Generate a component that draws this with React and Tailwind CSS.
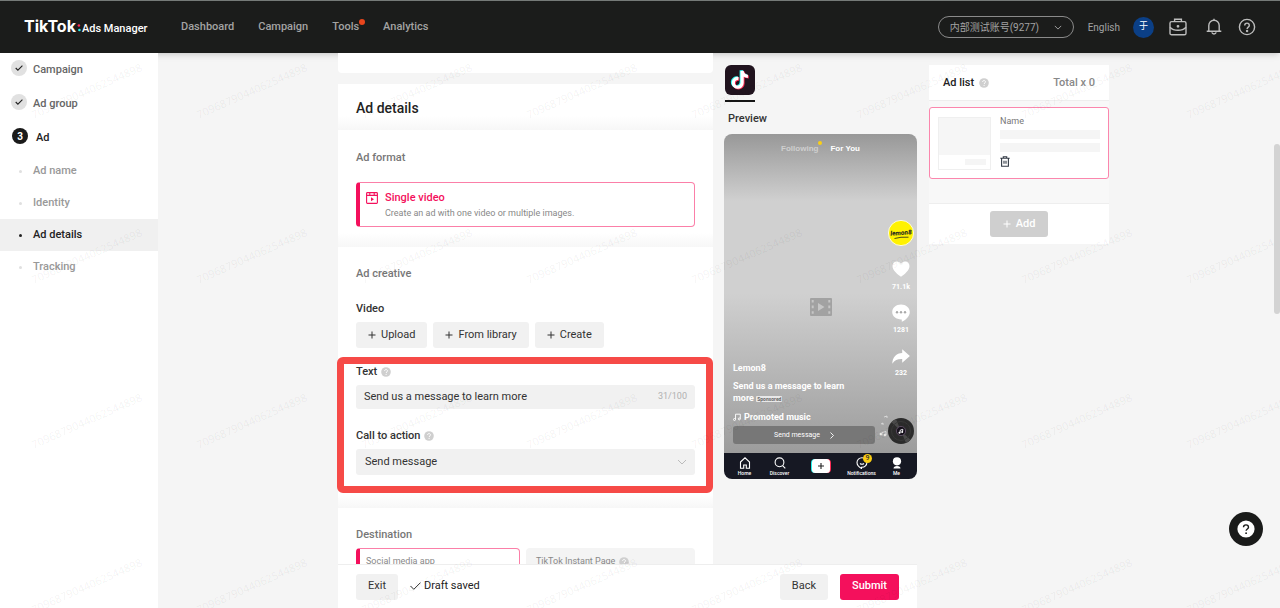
import React from 'react';

const steps = [
  { label: 'Campaign', done: true },
  { label: 'Ad group', done: true },
  { label: 'Ad', done: false },
];
const sections = ['Ad name', 'Identity', 'Ad details', 'Tracking'];
const watermarkCells = Array.from({ length: 32 }, (_, i) => i);

function Help() {
  return (
    <svg viewBox="0 0 10 10" className="size-[10px] shrink-0" aria-hidden="true">
      <circle cx="5" cy="5" r="4.8" fill="#cfcfcf" />
      <path d="M3.6 4c0-2 2.9-2 2.9-.1 0 1.1-1.4 1-1.4 2.1" fill="none" stroke="#fff" strokeWidth="0.9" />
      <circle cx="5.1" cy="7.4" r="0.55" fill="#fff" />
    </svg>
  );
}

function Chevron({ className }) {
  return (
    <svg viewBox="0 0 10 6" className={className} fill="none" stroke="currentColor" aria-hidden="true">
      <path d="M1 1l4 4 4-4" />
    </svg>
  );
}

function Plus() {
  return (
    <svg viewBox="0 0 8 8" className="size-2" fill="none" stroke="currentColor" aria-hidden="true">
      <path d="M4 0.5v7M0.5 4h7" />
    </svg>
  );
}

function TopBar() {
  const link = 'text-[11px] font-medium text-[#a3a3a3]';
  const icon = 'size-[18px]';
  return (
    <header className="flex h-[53px] shrink-0 items-center border-t border-[#757a78] bg-[#1b1c1b] px-6 shadow-md">
      <a href="#home" className="flex w-[157px] shrink-0 items-baseline text-white">
        <span className="font-[Inter,sans-serif] text-base leading-5 font-bold">TikTok</span>
        <svg viewBox="0 0 4 8" className="mx-px h-2 w-1" aria-hidden="true">
          <circle cx="1.9" cy="1.5" r="1.3" fill="#fe2c55" />
          <circle cx="2.4" cy="6" r="1.3" fill="#25f4ee" />
        </svg>
        <span className="text-[11px] font-medium">Ads Manager</span>
      </a>
      <nav className="flex flex-1 items-center gap-6 pt-px">
        <a href="#dashboard" className={link}>Dashboard</a>
        <a href="#campaign" className={link}>Campaign</a>
        <a href="#tools" className={'relative ' + link}>
          Tools
          <span className="absolute top-0 -right-[6px] size-[6px] rounded-full bg-[#e8451c]" />
        </a>
        <a href="#analytics" className={link}>Analytics</a>
      </nav>
      <div className="flex items-center text-[#bdbdbd]">
        <div className="relative flex items-center">
          <select aria-label="Account" className="h-[22px] w-[136px] appearance-none rounded-full border border-[#8a8a8a] bg-transparent pr-6 pl-[11px] text-[10px] text-[#a3a3a3]">
            <option>内部测试账号(9277)</option>
          </select>
          <Chevron className="pointer-events-none absolute right-3 h-[5px] w-2" />
        </div>
        <button type="button" className="ml-[14px] text-[10px] text-[#a3a3a3]">English</button>
        <span className="ml-[13px] flex size-[21px] items-center justify-center rounded-full bg-[#0b3f86] text-[9px] text-white">于</span>
        <button type="button" aria-label="Business center" className="ml-[15px]">
          <svg viewBox="0 0 18 18" className={icon} fill="none" stroke="currentColor" strokeWidth="1.4">
            <rect x="1" y="3.6" width="16" height="13.2" rx="1.6" />
            <path d="M5.6 3.6V1.2h6.8v2.4M1 9.2c2.2 2.4 5 3.1 8 3.1s5.800-.7 8-3.100" />
            <circle cx="9" cy="8.300" r="0.700" fill="currentColor" />
          </svg>
        </button>
        <button type="button" aria-label="Notifications" className="ml-[18px]">
          <svg viewBox="0 0 18 18" className={icon} fill="none" stroke="currentColor" strokeWidth="1.4">
            <path d="M1.700 13.300h14.600M3.800 13.300V7.400a5.200 5.200 0 0 1 10.400 0v5.900M9 .7v1.500M6.800 14.400a2.300 2.300 0 0 0 4.400 0" />
          </svg>
        </button>
        <button type="button" aria-label="Help" className="ml-[15px]">
          <svg viewBox="0 0 18 18" className={icon} fill="none" stroke="currentColor" strokeWidth="1.4">
            <circle cx="9" cy="9" r="7.600" />
            <path d="M6.700 7.400c0-3 4.600-3 4.600 0 0 1.700-2.200 1.700-2.200 3.500" />
            <circle cx="9.100" cy="13" r="0.500" fill="currentColor" />
          </svg>
        </button>
      </div>
    </header>
  );
}

function Sidebar() {
  return (
    <aside className="w-[158px] shrink-0 bg-white text-[11px] font-medium">
      <ol>
        {steps.map((s, i) => (
          <li key={s.label} className="flex h-[34px] items-center pl-[11px]">
            {s.done ? (
              <span className="mb-1 flex size-4 items-center justify-center rounded-full bg-[#e1e1e1]">
                <svg viewBox="0 0 8 6" className="h-[6px] w-2" fill="none" stroke="#222" strokeWidth="1.1">
                  <path d="M0.700 3l2.200 2.200L7.400.7" />
                </svg>
              </span>
            ) : (
              <span className="mb-1 ml-px flex size-4 items-center justify-center rounded-full bg-[#1a1a1a] text-[10px] font-bold text-white">{i + 1}</span>
            )}
            <a href="#step" className={s.done ? 'pt-px pl-[6px] text-[#666]' : 'pt-px pl-2 text-[#222]'}>{s.label}</a>
          </li>
        ))}
      </ol>
      <ul>
        {sections.map((s) => {
          const on = s === 'Ad details';
          return (
            <li key={s} className={on ? 'bg-[#f0f0f0] text-[#222]' : 'text-[#999]'}>
              <a href="#section" className="flex h-8 items-center gap-[11px] pl-[19px]">
                <span className={on ? 'size-[3px] rounded-full bg-[#222]' : 'size-[3px] rounded-full bg-[#e0e0e0]'} />
                {s}
              </a>
            </li>
          );
        })}
      </ul>
    </aside>
  );
}

function GreyButton({ children, className }) {
  return (
    <button type="button" className={'flex h-[26px] items-center gap-[5px] rounded-[3px] bg-[#f1f1f1] text-[11px] text-[#333] ' + className}>
      {children}
    </button>
  );
}

function AdForm() {
  const label = 'flex h-4 items-center gap-1 pt-[2px] text-[11px] font-medium text-[#333]';
  const heading = 'flex h-4 items-center pt-[2px] text-[11px] font-medium text-[#777]';
  return (
    <div className="w-[375px] shrink-0">
      <div className="mb-[11px] h-5 rounded-b-sm bg-white" />
      <div className="rounded-t-sm bg-white">
        <div className="h-[46px] bg-linear-to-b from-white from-70% to-[#f7f7f7] px-[18px] pt-[14px]">
          <h1 className="text-sm leading-5 font-medium text-[#222]">Ad details</h1>
        </div>
        <section className="bg-linear-to-b from-white from-88% to-[#f7f7f7] px-[18px] pt-[19px] pb-5">
          <h2 className={heading}>Ad format</h2>
          <button type="button" className="mt-[17px] flex h-[45px] w-full gap-[7px] rounded-[4px] border border-l-4 border-[#fb7fa8] border-l-[#f4105c] pt-[7px] pl-[6px] text-left">
            <svg viewBox="0 0 12 12" className="mt-[2px] size-3" fill="none" stroke="#f4105c" strokeWidth="1.100">
              <rect x="0.600" y="0.600" width="10.800" height="10.800" rx="0.800" />
              <path d="M0.600 3.400h10.800M3.800.6v2.800M8.200.6v2.800" />
              <path d="M5 5.300v4l3-2z" fill="#f4105c" stroke="none" />
            </svg>
            <span className="flex flex-col">
              <span className="text-[11px] leading-4 font-medium text-[#f4105c]">Single video</span>
              <span className="text-[9px] leading-[14px] text-[#888]">Create an ad with one video or multiple images.</span>
            </span>
          </button>
        </section>
        <section className="bg-linear-to-b from-white from-95% to-[#f7f7f7] px-[18px] pt-[18px] pb-[33px]">
          <h2 className={heading}>Ad creative</h2>
          <h3 className={'mt-[19px] ' + label}>Video</h3>
          <div className="mt-[6px] flex gap-[6px]">
            <GreyButton className="px-3"><Plus />Upload</GreyButton>
            <GreyButton className="px-3"><Plus />From library</GreyButton>
            <GreyButton className="px-3"><Plus />Create</GreyButton>
          </div>
          <div className="relative mt-[15px]">
            <label htmlFor="ad-text" className={label}>Text <Help /></label>
            <div className="mt-[6px] flex h-6 items-center rounded-[3px] bg-[#f1f1f1] px-2">
              <input id="ad-text" defaultValue="Send us a message to learn more" className="min-w-0 flex-1 bg-transparent text-[11px] text-[#333] outline-none" />
              <span className="text-[9px] text-[#b0b0b0]">31/100</span>
            </div>
            <label htmlFor="cta" className={'mt-[18px] ' + label}>Call to action <Help /></label>
            <div className="relative mt-[6px] flex items-center">
              <select id="cta" className="h-[26px] w-full appearance-none rounded-[3px] bg-[#f1f1f1] px-[9px] text-[11px] text-[#333]">
                <option>Send message</option>
              </select>
              <Chevron className="pointer-events-none absolute right-2 h-[6px] w-[10px] text-[#bbb]" />
            </div>
            <div className="pointer-events-none absolute -top-[6px] -right-[18px] -bottom-[18px] -left-[19px] rounded-md border-[7px] border-[#f64a47]" />
          </div>
        </section>
        <section className="px-[18px] pt-[18px]">
          <h2 className={heading}>Destination</h2>
          <div className="mt-[6px] flex gap-[6px]">
            <button type="button" className="h-10 w-[164px] rounded-[4px] border border-l-4 border-[#fb7fa8] border-l-[#f4105c] pb-3 pl-[6px] text-left text-[9px] text-[#888]">Social media app</button>
            <button type="button" className="flex h-10 flex-1 items-center gap-1 rounded-[4px] bg-[#f4f4f4] pb-3 pl-[10px] text-[9px] text-[#888]">TikTok Instant Page <Help /></button>
          </div>
        </section>
      </div>
    </div>
  );
}

function TikTokIcon() {
  const note = 'M13.400 12.800a4.400 4.400 0 1 0 3.700 4.300V5.200c.3 2.900 2.300 5.200 5.800 5.400';
  return (
    <svg viewBox="0 0 30 30" className="size-[30px]" aria-label="TikTok">
      <rect width="30" height="30" rx="6" fill="#21141f" />
      <g fill="none" strokeWidth="3.200">
        <path d={note} stroke="#25f4ee" transform="translate(-0.900 0)" />
        <path d={note} stroke="#fe2c55" transform="translate(0.900 1.400)" />
        <path d={note} stroke="#fff" transform="translate(0 0.700)" />
      </g>
    </svg>
  );
}

function Rail() {
  const count = 'h-3 text-[7px] leading-3 font-bold';
  return (
    <div className="flex w-[26px] shrink-0 flex-col items-center text-white">
      <svg viewBox="0 0 26 26" className="mb-[15px] size-[26px]" aria-label="Lemon8">
        <circle cx="13" cy="13" r="12.600" fill="#fff200" stroke="#fff" strokeWidth="0.800" />
        <text x="13" y="15" textAnchor="middle" fontSize="6.500" fontWeight="800" fontStyle="italic" fill="#222" transform="rotate(-4 13 13)">lemon8</text>
        <path d="M6.500 18.500q6-1.800 14-1.300" fill="none" stroke="#222" strokeWidth="0.800" />
      </svg>
      <svg viewBox="0 0 18 16" className="mb-1 h-4 w-[18px]" fill="#fff">
        <path d="M9 15.800C5.500 13.200.5 9.500.5 5 .5 2.400 2.400.5 4.900.5 6.700.5 8.200 1.400 9 2.900 9.800 1.400 11.300.5 13.100.5c2.500 0 4.400 1.900 4.400 4.500 0 4.500-5 8.200-8.500 10.800z" />
      </svg>
      <span className={count}>71.1k</span>
      <svg viewBox="0 0 18 18" className="mt-[11px] mb-[2px] size-[18px]" fill="#fff">
        <path d="M9 .5c5 0 8.800 3.300 8.800 7.600 0 3.800-3.300 7.800-8 9.700v-2.300C4.300 15.700.2 12.300.2 8.100.2 3.800 4 .5 9 .5z" />
        <g fill="#aaa"><circle cx="5" cy="8.300" r="1.200" /><circle cx="9" cy="8.300" r="1.200" /><circle cx="13" cy="8.300" r="1.200" /></g>
      </svg>
      <span className={count}>1281</span>
      <svg viewBox="0 0 18 15" className="mt-[13px] mb-[3px] h-[15px] w-[18px]" fill="#fff">
        <path d="M10.200.3L17.900 7l-7.700 6.800V9.900C5.900 9.700 2.600 11 .3 14.700.5 8 4.300 4.300 10.200 4z" />
      </svg>
      <span className={count}>232</span>
      <div className="relative mt-auto size-[26px]">
        <svg viewBox="0 0 26 26" className="size-[26px]">
          <circle cx="13" cy="13" r="13" fill="#2b2b2b" />
          <path d="M13 13L3.500 4.200A13 13 0 0 1 8 1zM13 13l9.500 8.800a13 13 0 0 1-4.500 3.200z" fill="#4a4a4a" />
          <circle cx="13" cy="13" r="9.500" fill="none" stroke="#383838" />
          <circle cx="13" cy="13" r="4.600" fill="#15101a" stroke="#6b5871" strokeWidth="0.800" />
          <path d="M12 14.700l.3-2.600 2.500-.8-.3 2.600" fill="none" stroke="#fff" strokeWidth="0.900" />
          <circle cx="11.500" cy="14.700" r="1" fill="#fff" /><circle cx="14.200" cy="13.900" r="1" fill="#fff" />
        </svg>
        <svg viewBox="0 0 10 26" className="absolute -top-1 right-[25px] h-[26px] w-[10px]" fill="none" stroke="#e4e4e4" strokeWidth="0.800">
          <path d="M5 3l3-1v2M2 10l2-1v2M3 18.500l4-1v3.500M3 18.500v3" />
          <circle cx="1.900" cy="20" r="1" fill="#fff" /><circle cx="6" cy="21" r="1" fill="#fff" />
        </svg>
      </div>
    </div>
  );
}

function Preview() {
  const tab = 'flex flex-col items-center gap-[1px] text-[5px] leading-[6px] font-medium';
  return (
    <div className="ml-[11px] flex flex-1 flex-col items-start pt-3">
      <div className="ml-px border-b-2 border-[#161616] pb-[5px]"><TikTokIcon /></div>
      <h2 className="mt-2 ml-1 text-[11px] leading-[18px] font-medium text-[#333]">Preview</h2>
      <div className="mt-[6px] flex h-[345px] w-full flex-col overflow-hidden rounded-lg">
        <div className="relative flex flex-1 flex-col bg-[linear-gradient(#989898,#d0d0d0_21%,#d0d0d0_50%,#9c9c9c)] pb-[9px]">
          <div className="flex h-[30px] items-center justify-center gap-3 font-['Liberation_Sans',sans-serif] text-[8px] font-bold">
            <span className="relative text-[#cfcfcf]">Following
              <span className="absolute -top-[2px] -right-[4px] size-1 rounded-full bg-[#fbcf13]" />
            </span>
            <span className="text-white">For You</span>
          </div>
          <div className="absolute inset-0 top-[26px] flex items-center justify-center">
            <svg viewBox="0 0 22 18" className="h-[18px] w-[22px]">
              <rect width="22" height="18" rx="1" fill="#a2a2a2" />
              <path d="M8 5v8l6.500-4z" fill="#c6c6c6" />
              <path d="M2.700 2v14M19.300 2v14" stroke="#c6c6c6" strokeWidth="2" strokeDasharray="2.600 3" />
            </svg>
          </div>
          <div className="relative flex flex-1 pt-14 pr-[3px] pl-[9px]">
            <div className="flex flex-1 flex-col justify-end text-[9px] leading-3 font-bold text-white">
              <p>Lemon8</p>
              <p className="mt-[6px] w-[126px]">Send us a message to learn more <span className="inline-block rounded-[1px] bg-[#e8e8e8] px-[1px] text-[5px] leading-[6px] text-[#666]">Sponsored</span></p>
              <p className="mt-[7px] flex items-center gap-[3px]">
                <svg viewBox="0 0 8 8" className="size-2" fill="none" stroke="#fff" strokeWidth="0.900">
                  <path d="M2.500 6.500V1.200h4.800v4.500" /><circle cx="1.500" cy="6.500" r="1" /><circle cx="6.300" cy="5.900" r="1" />
                </svg>
                Promoted music
              </p>
              <button type="button" className="mt-[3px] mr-[13px] flex h-[18px] items-center justify-center gap-[10px] rounded-[3px] bg-[#777] text-[7px] font-normal">
                Send message
                <svg viewBox="0 0 4 7" className="h-[7px] w-1" fill="none" stroke="#fff" strokeWidth="0.900"><path d="M.5.5l3 3-3 3" /></svg>
              </button>
            </div>
            <Rail />
          </div>
        </div>
        <div className="grid h-[26px] shrink-0 grid-cols-[35fr_35fr_47fr_35fr_35fr] items-center bg-[#161823] px-[3px] text-white">
          <span className={tab}>
            <svg viewBox="0 0 12 12" className="size-3" fill="none" stroke="#fff" strokeWidth="1.100"><path d="M1.500 5L6 .8 10.500 5v6.200H7.300V8H4.700v3.200H1.500z" /></svg>
            Home
          </span>
          <span className={tab}>
            <svg viewBox="0 0 12 12" className="size-3" fill="none" stroke="#fff" strokeWidth="1.100"><circle cx="5.500" cy="5.300" r="4.400" /><path d="M8.600 8.600l2.700 2.700" /></svg>
            Discover
          </span>
          <span className="flex justify-center">
            <svg viewBox="0 0 20 14" className="h-[14px] w-5">
              <rect width="12" height="14" rx="4" fill="#25f4ee" /><rect x="8" width="12" height="14" rx="4" fill="#fe2c55" />
              <rect x="1" width="18" height="14" rx="3.500" fill="#fff" /><path d="M10 4v6M7 7h6" stroke="#222" strokeWidth="1.100" />
            </svg>
          </span>
          <span className={'relative ' + tab}>
            <svg viewBox="0 0 12 12" className="size-3" fill="none" stroke="#fff" strokeWidth="1.100"><path d="M6 .8a4.900 4.700 0 1 1 0 9.400H5.500v1.200C2.700 10 1 8 1 5.500 1 3 3.200.8 6 .8zM4 6.500q2 1.500 4 0" /></svg>
            Notifications
            <span className="absolute -top-[3px] left-[19px] flex size-[9px] items-center justify-center rounded-full bg-[#facd12] text-[7px] text-[#333]">9</span>
          </span>
          <span className={tab}>
            <svg viewBox="0 0 12 12" className="size-3" fill="#fff"><circle cx="6" cy="4.300" r="4.100" /><path d="M2.500 11.500q0-2.500 3.500-2.500t3.500 2.500z" /></svg>
            Me
          </span>
        </div>
      </div>
    </div>
  );
}

function AdList() {
  return (
    <aside className="mt-3 ml-3 w-[180px] shrink-0 self-start bg-[#f8f8f8] text-[11px] font-medium">
      <div className="flex h-9 items-center gap-[5px] border-b border-[#eee] bg-white px-[14px] pt-px text-[#222]">
        <h2>Ad list</h2>
        <Help />
        <span className="ml-auto text-[#888]">Total x 0</span>
      </div>
      <div className="mt-[6px] flex h-[72px] gap-[9px] rounded-[3px] border border-[#fb86ad] bg-white p-2">
        <div className="mt-px flex size-[53px] flex-col border border-[#efefef]">
          <div className="flex-1 bg-[#f6f6f6]" />
          <div className="flex h-[14px] items-center justify-end pr-1"><span className="h-[6px] w-[21px] bg-[#f5f5f5]" /></div>
        </div>
        <div className="flex flex-1 flex-col">
          <span className="text-[9px] leading-[11px] font-normal text-[#777]">Name</span>
          <span className="mt-[3px] h-[9px] bg-[#f5f5f5]" />
          <span className="mt-1 h-[9px] bg-[#f5f5f5]" />
          <button type="button" aria-label="Delete ad" className="mt-1 self-start">
            <svg viewBox="0 0 10 11" className="h-[11px] w-[10px]" fill="none" stroke="#333a45" strokeWidth="1.100">
              <path d="M.3 2.300h9.400M3.300 2.300V.7h3.400v1.600M1.600 2.300v8h6.800v-8M4 4.800v3M6 4.800v3" />
            </svg>
          </button>
        </div>
      </div>
      <div className="mt-6 flex h-[41px] items-center justify-center border-t border-[#eee] bg-white">
        <button type="button" disabled className="flex h-[26px] items-center gap-[5px] rounded-[3px] bg-[#cfcfcf] px-[13px] text-white"><Plus />Add</button>
      </div>
    </aside>
  );
}

function Watermark() {
  return (
    <div aria-hidden="true" className="pointer-events-none absolute inset-0 overflow-hidden">
      <div className="grid w-max auto-rows-[165px] grid-cols-[repeat(8,165px)] font-['Noto_Sans',sans-serif] text-[11px] text-black/6">
        {watermarkCells.map((i) => (
          <span key={i} className="flex items-start justify-center pt-[30px] pl-2 leading-4"><span className="-rotate-[24deg]">7096879044062544898</span></span>
        ))}
      </div>
    </div>
  );
}

export default function App() {
  return (
    <div className="flex h-screen flex-col overflow-hidden bg-[#f5f5f5] font-[Roboto,'Noto_Sans_CJK_SC',sans-serif]">
      <TopBar />
      <div className="relative flex min-h-0 flex-1">
        <Sidebar />
        <main className="flex min-w-0 flex-1 pl-[178px]">
          <div className="flex w-[581px] shrink-0 flex-col">
            <div className="flex min-h-0 flex-1 overflow-hidden pl-[2px]">
              <AdForm />
              <Preview />
            </div>
            <footer className="ml-[2px] flex h-11 shrink-0 items-center border-t border-[#eee] bg-white px-[18px] text-[11px] text-[#222]">
              <GreyButton className="px-3">Exit</GreyButton>
              <svg viewBox="0 0 11 8" className="mr-[3px] mb-[2px] ml-3 h-2 w-[11px]" fill="none" stroke="#333"><path d="M.5 4l3.300 3.300L10.500.6" /></svg>
              Draft saved
              <span className="flex-1" />
              <GreyButton className="px-3">Back</GreyButton>
              <button type="button" className="ml-3 h-[26px] rounded-[3px] bg-[#f4105c] px-3 font-medium text-white">Submit</button>
            </footer>
          </div>
          <AdList />
        </main>
        <Watermark />
        <div className="absolute top-[91px] right-0 h-[170px] w-[6px] rounded-full bg-[#d3d3d3]" />
        <button type="button" aria-label="Support" className="absolute right-[17px] bottom-[62px] flex size-[34px] items-center justify-center rounded-full bg-[#1a1b1a]">
          <svg viewBox="0 0 18 18" className="size-[18px]">
            <circle cx="9" cy="9" r="8.600" fill="#fff" />
            <path d="M6.500 7.300c0-3.300 5-3.300 5 0 0 1.700-2.400 1.700-2.400 3.500" fill="none" stroke="#1a1b1a" strokeWidth="1.400" />
            <circle cx="9.100" cy="13.200" r="0.900" fill="#1a1b1a" />
          </svg>
        </button>
      </div>
    </div>
  );
}
